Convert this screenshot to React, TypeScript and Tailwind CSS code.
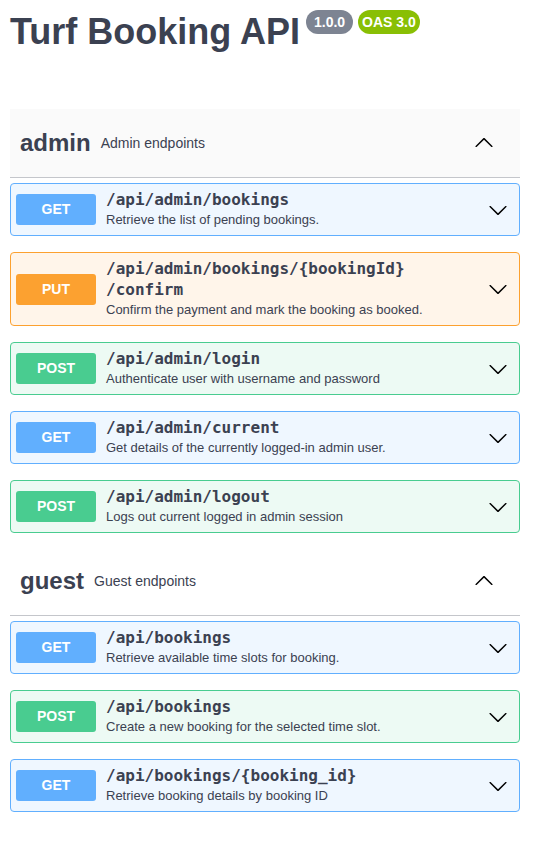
type Method = 'GET' | 'PUT' | 'POST'

type Op = {
  method: Method
  path: string[]
  summary: string
}

type Tag = {
  name: string
  description: string
  hovered?: boolean
  ops: Op[]
}

const methodStyles: Record<Method, { card: string; badge: string }> = {
  GET: { card: 'border-[#61affe] bg-[#eff7ff]', badge: 'bg-[#61affe]' },
  PUT: { card: 'border-[#fca130] bg-[#fff5ea]', badge: 'bg-[#fca130]' },
  POST: { card: 'border-[#49cc90] bg-[#edfaf4]', badge: 'bg-[#49cc90]' },
}

const tags: Tag[] = [
  {
    name: 'admin',
    description: 'Admin endpoints',
    hovered: true,
    ops: [
      { method: 'GET', path: ['/api/admin/bookings'], summary: 'Retrieve the list of pending bookings.' },
      {
        method: 'PUT',
        path: ['/api/admin/bookings/{bookingId}', '/confirm'],
        summary: 'Confirm the payment and mark the booking as booked.',
      },
      { method: 'POST', path: ['/api/admin/login'], summary: 'Authenticate user with username and password' },
      { method: 'GET', path: ['/api/admin/current'], summary: 'Get details of the currently logged-in admin user.' },
      { method: 'POST', path: ['/api/admin/logout'], summary: 'Logs out current logged in admin session' },
    ],
  },
  {
    name: 'guest',
    description: 'Guest endpoints',
    ops: [
      { method: 'GET', path: ['/api/bookings'], summary: 'Retrieve available time slots for booking.' },
      { method: 'POST', path: ['/api/bookings'], summary: 'Create a new booking for the selected time slot.' },
      { method: 'GET', path: ['/api/bookings/{booking_id}'], summary: 'Retrieve booking details by booking ID' },
    ],
  },
]

// swagger-ui style arrow
function Arrow({ up = false }: { up?: boolean }) {
  return (
    <svg width="20" height="20" viewBox="0 0 20 20" className={up ? 'rotate-180 shrink-0' : 'shrink-0'}>
      <path
        fill="#000"
        d="M17.418 6.109c.272-.268.709-.268.979 0s.271.701 0 .969l-7.908 7.83c-.27.268-.707.268-.979 0l-7.908-7.83c-.27-.268-.27-.701 0-.969.271-.268.709-.268.979 0L10 13.25l7.418-7.141z"
      />
    </svg>
  )
}

function OpBlock({ op }: { op: Op }) {
  const s = methodStyles[op.method]
  return (
    <div className={`flex items-center rounded-[4px] border p-[5px] ${s.card}`}>
      <div
        className={`flex h-[31px] w-[80px] shrink-0 items-center justify-center rounded-[3px] text-[14px] font-bold text-white ${s.badge}`}
      >
        {op.method}
      </div>
      <div className="ml-[10px] flex-1 text-[#3b4151]">
        {op.path.map((p) => (
          <div key={p} className="text-[16px] font-bold leading-[21px]" style={{ fontFamily: '"DejaVu Sans Mono", monospace' }}>
            {p}
          </div>
        ))}
        <div className="text-[13px] leading-[20px]">{op.summary}</div>
      </div>
      <div className="mr-[6px]">
        <Arrow />
      </div>
    </div>
  )
}

export default function App() {
  return (
    <div
      className="min-h-[849px] w-full bg-white pl-[10px] pr-[16px] pt-[10px] text-[#3b4151]"
      style={{ fontFamily: '"Liberation Sans", Arial, sans-serif' }}
    >
      <div className="flex items-start">
        <h1 className="text-[36px] font-bold leading-[44px]">Turf Booking API</h1>
        <span className="ml-[6px] rounded-full bg-[#7d8492] px-[8px] text-[14px] font-bold leading-[24px] text-white">1.0.0</span>
        <span className="ml-[5px] rounded-full bg-[#89bf04] px-[4px] text-[14px] font-bold leading-[24px] text-white">OAS 3.0</span>
      </div>

      <div className="mt-[55px] flex flex-col gap-[14px]">
        {tags.map((tag) => (
          <div key={tag.name}>
            <div
              className={`flex h-[69px] items-center border-b border-[#c4c6cb] pl-[10px] pr-[26px] ${tag.hovered ? 'bg-[#fafafa]' : ''}`}
            >
              <span className="text-[24px] font-bold">{tag.name}</span>
              <span className="ml-[10px] text-[14px]">{tag.description}</span>
              <span className="ml-auto">
                <Arrow up />
              </span>
            </div>
            <div className="mt-[5px] flex flex-col gap-[16px]">
              {tag.ops.map((op, i) => (
                <OpBlock key={i} op={op} />
              ))}
            </div>
          </div>
        ))}
      </div>
    </div>
  )
}
